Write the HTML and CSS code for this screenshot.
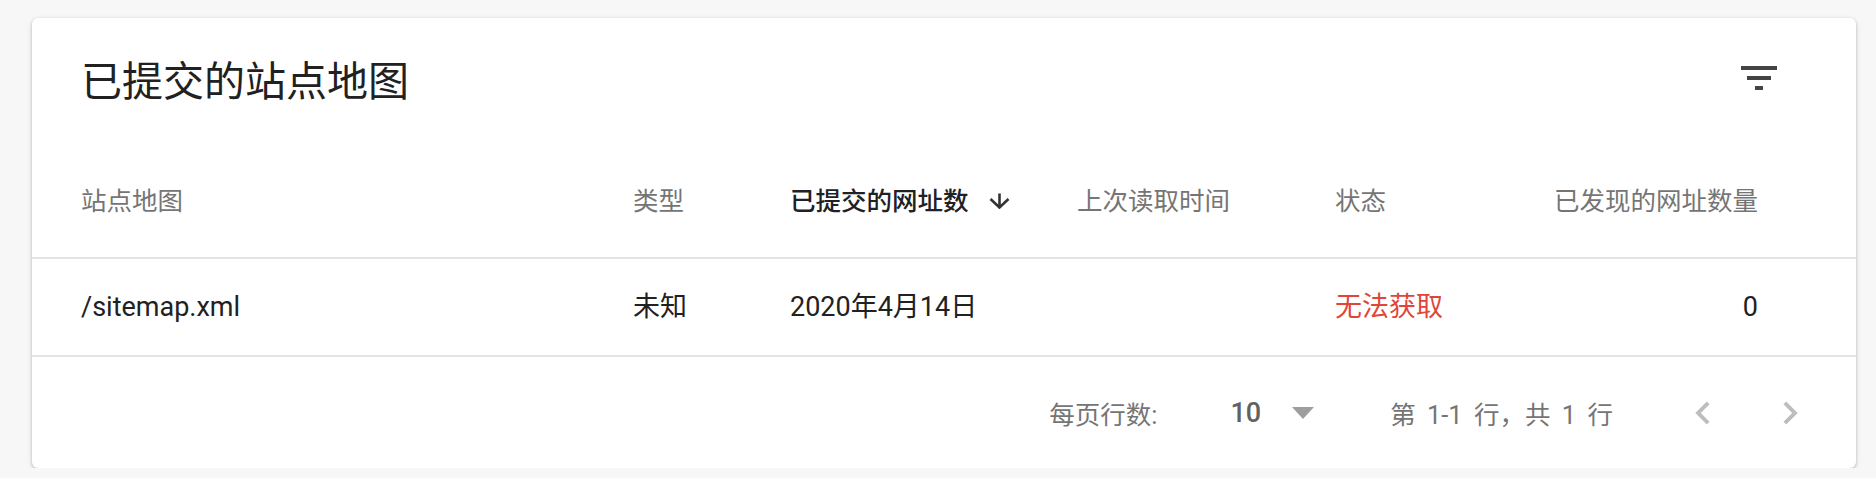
FILE: index.html
```html
<!DOCTYPE html>
<html lang="zh-CN">
<head>
<meta charset="utf-8">
<title>已提交的站点地图</title>
<link rel="stylesheet" href="styles.css">
</head>
<body>
<div class="card">
  <div class="title-bar">
    <h1 class="title">已提交的站点地图</h1>
    <svg class="filter-icon" viewBox="0 0 24 24" width="48" height="48"><path d="M10 18h4v-2h-4v2zM3 6v2h18V6H3zm3 7h12v-2H6v2z"/></svg>
  </div>
  <div class="row head">
    <div class="cell">站点地图</div>
    <div class="cell">类型</div>
    <div class="cell active">已提交的网址数<svg class="sort-arrow" viewBox="0 0 21 16" width="21" height="16"><path d="M10.5 0.5V14.5M1.5 6L10.5 14.5L19.5 6" fill="none" stroke="#333" stroke-width="2.6"/></svg></div>
    <div class="cell">上次读取时间</div>
    <div class="cell">状态</div>
    <div class="cell num">已发现的网址数量</div>
  </div>
  <div class="row body">
    <div class="cell">/sitemap.xml</div>
    <div class="cell">未知</div>
    <div class="cell">2020年4月14日</div>
    <div class="cell"></div>
    <div class="cell error">无法获取</div>
    <div class="cell num">0</div>
  </div>
  <div class="footer">
    <span class="label">每页行数:</span>
    <span class="page-size">10</span>
    <span class="caret"></span>
    <span class="range">第 1-1 行，共 1 行</span>
    <svg class="chev prev" viewBox="0 0 24 24" width="46" height="46"><path d="M15.41 7.41L14 6l-6 6 6 6 1.41-1.41L10.83 12z"/></svg>
    <svg class="chev next" viewBox="0 0 24 24" width="46" height="46"><path d="M10 6L8.59 7.41 13.17 12l-4.58 4.59L10 18l6-6z"/></svg>
  </div>
</div>
</body>
</html>
```
FILE: styles.css
```css
html, body {
  margin: 0;
  padding: 0;
}
body {
  background: #f7f7f7;
  font-family: Roboto, "Noto Sans CJK SC", sans-serif;
  color: #212121;
  padding: 18px 20px 0 32px;
}
.card {
  background: #fff;
  border-radius: 6px;
  box-shadow: 0 1px 3px rgba(0,0,0,0.22), 0 2px 6px rgba(0,0,0,0.1);
  overflow: hidden;
}
.title-bar {
  height: 127px;
  display: flex;
  align-items: center;
  justify-content: space-between;
  padding: 0 73px 0 49px;
}
.title {
  margin: 0;
  font-size: 41px;
  font-weight: 400;
  line-height: 50px;
  color: #212121;
}
.filter-icon {
  fill: #444;
  margin-bottom: 7px;
}
.row {
  display: grid;
  grid-template-columns: 552px 157px 287px 258px 185px 238px;
  align-items: center;
  padding: 0 98px 0 49px;
  border-bottom: 2px solid #e4e4e4;
}
.row.head {
  height: 112px;
  font-size: 25.5px;
  color: #757575;
}
.row.body {
  height: 96px;
  font-size: 27px;
  color: #212121;
}
.cell {
  white-space: nowrap;
  line-height: 36px;
}
.cell.num {
  text-align: right;
}
.cell.active {
  color: #202124;
  font-weight: 500;
  display: flex;
  align-items: center;
}
.sort-arrow {
  margin-left: 20px;
}
.cell.error {
  color: #df4539;
}
.footer {
  height: 111px;
  display: flex;
  align-items: center;
  justify-content: flex-end;
  padding-right: 43px;
  font-size: 25.5px;
  color: #757575;
}
.page-size {
  margin-left: 73px;
  font-size: 27px;
  font-weight: 500;
  color: #616161;
}
.caret {
  margin-left: 31px;
  width: 0;
  height: 0;
  border-left: 11.5px solid transparent;
  border-right: 11.5px solid transparent;
  border-top: 12px solid #9e9e9e;
}
.range {
  margin-left: 76px;
  word-spacing: 5px;
}
.chev {
  fill: #bdbdbd;
}
.chev.prev {
  margin-left: 67px;
}
.chev.next {
  margin-left: 41px;
}
```
